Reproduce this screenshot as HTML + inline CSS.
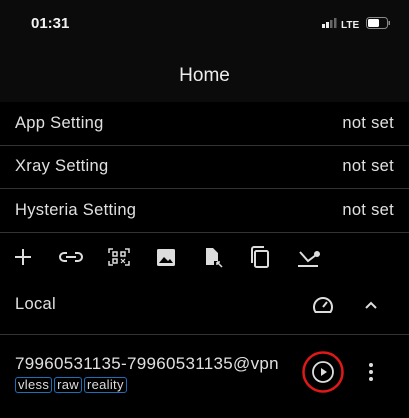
<!DOCTYPE html>
<html><head><style>
body{margin:0;width:409px;height:418px;background:#000;overflow:hidden;font-family:"Liberation Sans",sans-serif;color:#e0e0e0;position:relative}
.a{position:absolute}
.hdr{left:0;top:0;width:409px;height:102px;background:#0b0b0b}
.row{left:0;width:409px;height:43px;border-bottom:1.5px solid #333;font-size:16.5px;letter-spacing:0.3px}
.row span{position:absolute;top:12px}
.tag{display:inline-block;border:1.3px solid #1e6fb8;border-radius:3px;font-size:13px;padding:0 2px;line-height:14px;margin-right:2px;color:#ddd;letter-spacing:0.3px}
</style></head><body>
<div class="a hdr"></div>
<div class="a" style="left:31px;top:15px;font-size:15px;font-weight:bold;color:#f2f2f2">01:31</div>
<svg class="a" style="left:320px;top:17px" width="75" height="14">
<rect x="2" y="7" width="3" height="4" fill="#eee"/><rect x="6" y="5" width="3" height="6" fill="#eee"/><rect x="10" y="3" width="2.5" height="8" fill="#666"/><rect x="14" y="1" width="2.5" height="10" fill="#666"/>
<text x="21" y="11" font-size="10" font-weight="bold" fill="#eee" font-family="Liberation Sans">LTE</text>
<rect x="46.5" y="0.5" width="21" height="11" rx="3" fill="none" stroke="#888"/><rect x="48" y="2" width="11" height="8" rx="1.5" fill="#fff"/><rect x="68.5" y="4" width="1.5" height="4" fill="#888"/>
</svg>
<div class="a" style="left:0;width:409px;top:65px;text-align:center;font-size:19px;color:#eee">Home</div>
<div class="a row" style="top:102px"><span style="left:15px">App Setting</span><span style="right:15px">not set</span></div>
<div class="a row" style="top:145px"><span style="left:15px">Xray Setting</span><span style="right:15px">not set</span></div>
<div class="a row" style="top:189px"><span style="left:15px">Hysteria Setting</span><span style="right:15px">not set</span></div>
<svg class="a" style="left:0;top:232px" width="409" height="98" fill="none" stroke="#ddd" stroke-width="2">
<path d="M23 17v16M15 25h16"/>
<path d="M67 21h-3a4 4 0 0 0 0 8h3M75 21h3a4 4 0 0 1 0 8h-3M66 25h10" />
<path d="M109 21v-4h4M125 17h4v4M109 29v4h4M129 29v4h-4" stroke-width="1.5"/>
<rect x="113" y="20" width="4" height="4" stroke-width="1.5"/><rect x="121" y="20" width="4" height="4" stroke-width="1.5"/><rect x="113" y="27" width="4" height="4" stroke-width="1.5"/><path d="M121 27l4 4M125 27l-4 4" stroke-width="1.2"/>
<rect x="157" y="17" width="18" height="17" rx="1.5" fill="#ddd" stroke="none"/><path d="M159 31l5-6 4 4 2-2 3 4z" fill="#000" stroke="none"/>
<path d="M206 16h7l5 5v8h-4v4h-8z" fill="#ddd" stroke="none"/><path d="M217 30l5 5M217 30h3M217 30v3" stroke-width="1.5"/>
<rect x="255" y="19" width="13" height="16" rx="1.5"/><path d="M252 31v-14a2 2 0 0 1 2-2h10"/>
<path d="M298 34h20M300 20l8 9 8-6" /><circle cx="317" cy="22" r="2" fill="#ddd"/>
<path d="M315.5 80a9 9 0 1 1 15 0z" /><path d="M323 75l4-5" />
<path d="M366 76l5-5 5 5"/>
</svg>
<div class="a" style="left:15px;top:295px;font-size:16.5px;letter-spacing:0.3px">Local</div>
<div class="a" style="left:0;top:334px;width:409px;border-top:1.5px solid #333"></div>
<div class="a" style="left:15px;top:354px;font-size:17px;letter-spacing:0.3px">79960531135-79960531135@vpn</div>
<div class="a" style="left:15px;top:376px;white-space:nowrap"><span class="tag">vless</span><span class="tag">raw</span><span class="tag">reality</span></div>
<svg class="a" style="left:300px;top:350px" width="90" height="46">
<circle cx="23" cy="22" r="19.5" fill="none" stroke="#e01818" stroke-width="2.5"/>
<circle cx="23" cy="22" r="10" fill="none" stroke="#ddd" stroke-width="1.8"/><path d="M21 18v8l6-4z" fill="#ddd"/>
<circle cx="71" cy="15" r="2" fill="#ddd"/><circle cx="71" cy="22" r="2" fill="#ddd"/><circle cx="71" cy="29" r="2" fill="#ddd"/>
</svg>
</body></html>
